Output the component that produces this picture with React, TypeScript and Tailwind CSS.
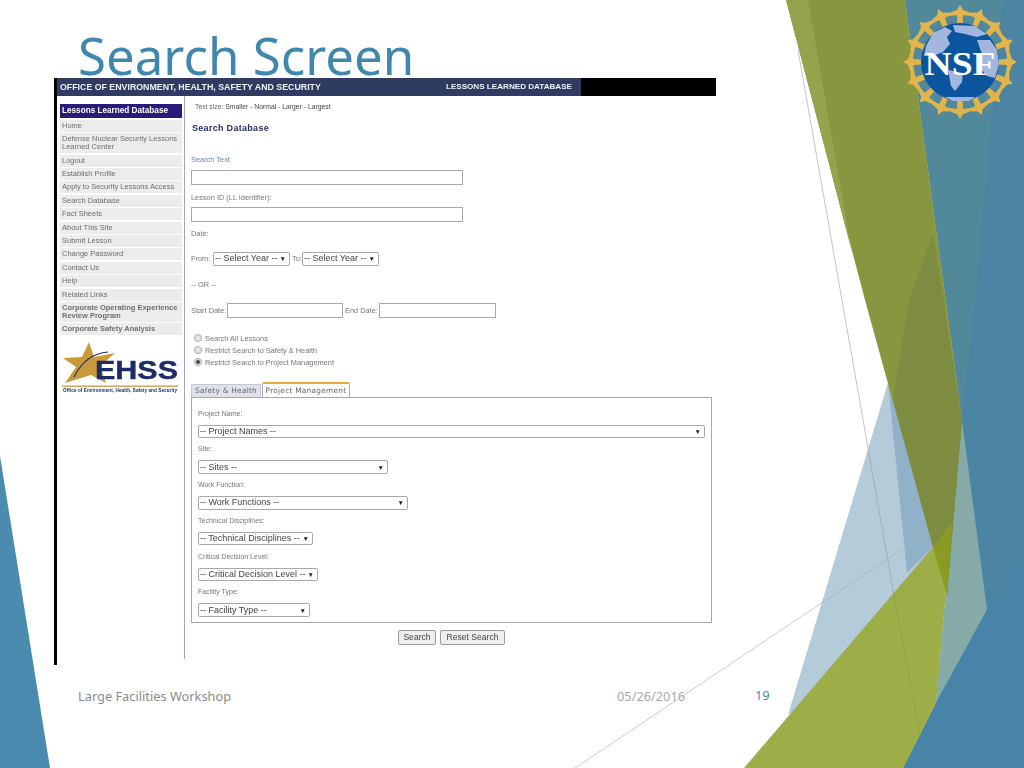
const ARIAL = "font-['Liberation_Sans',Arial,sans-serif]";

const MENU: { label: string; tall?: boolean; bold?: boolean }[] = [
  { label: "Home" },
  { label: "Defense Nuclear Security Lessons Learned Center", tall: true },
  { label: "Logout" },
  { label: "Establish Profile" },
  { label: "Apply to Security Lessons Access" },
  { label: "Search Database" },
  { label: "Fact Sheets" },
  { label: "About This Site" },
  { label: "Submit Lesson" },
  { label: "Change Password" },
  { label: "Contact Us" },
  { label: "Help" },
  { label: "Related Links" },
  { label: "Corporate Operating Experience Review Program", tall: true, bold: true },
  { label: "Corporate Safety Analysis", bold: true },
];

const SELECTS = [
  { label: "Project Name:", value: "-- Project Names --", width: "w-[507px]" },
  { label: "Site:", value: "-- Sites --", width: "w-[190px]" },
  { label: "Work Function:", value: "-- Work Functions --", width: "w-[210px]" },
  { label: "Technical Disciplines:", value: "-- Technical Disciplines --", width: "w-[115px]" },
  { label: "Critical Decision Level:", value: "-- Critical Decision Level --", width: "w-[120px]" },
  { label: "Facility Type:", value: "-- Facility Type --", width: "w-[112px]" },
];

const RADIOS = [
  { label: "Search All Lessons", on: false },
  { label: "Restrict Search to Safety & Health", on: false },
  { label: "Restrict Search to Project Management", on: true },
];

function SlideBackground() {
  return (
    <svg className="absolute inset-0" width="1024" height="768" viewBox="0 0 1024 768">
      <polygon points="0,456 50,768 0,768" fill="#4b8bb0" />
      {/* pale blue wedge */}
      <polygon points="933,233 962,420 950,600 788,715" fill="#b4ccda" />
      <polygon points="888,382 933,547 907,573" fill="#90b1c8" />
      {/* right blue field */}
      <polygon points="905,0 1024,0 1024,768 903,768 936,703 962,420" fill="#4c84a3" />
      <polygon points="905,0 1003,0 975,300 962,420" fill="#51899a" />
      <polygon points="962,420 987,610 936,703 952,523" fill="#85aaa8" />
      <polygon points="1024,558 1024,768 903,768 936,703 987,610" fill="#4784a8" />
      {/* olive */}
      <polygon points="786,0 905,0 962,420 947,595 933,547 865,300" fill="#88963f" />
      <polygon points="786,0 808,0 848,230 852,252" fill="#94a34c" />
      <polygon points="933,233 962,420 947,595 933,547 893,400 908,305" fill="#7d8c41" />
      {/* lime */}
      <polygon points="744,768 933,547 952,523 936,703 903,768" fill="#9dae48" />
      <polygon points="933,547 952,523 947,595" fill="#8a9a22" />
      {/* hairlines */}
      <line x1="798" y1="50" x2="893" y2="590" stroke="#9a9a9a" strokeWidth="0.8" opacity="0.75" />
      <line x1="893" y1="590" x2="920" y2="735" stroke="#8a9a40" strokeWidth="0.8" opacity="0.7" />
      <line x1="575" y1="768" x2="928" y2="532" stroke="#a9a9a9" strokeWidth="0.8" opacity="0.75" />
    </svg>
  );
}

const RAYS = Array.from({ length: 16 }, (_, i) => (i * 360) / 16);

function NsfLogo() {
  return (
    <svg className="absolute left-[895px] top-0" width="129" height="125" viewBox="0 0 129 125">
      <circle cx="65" cy="62" r="48.5" fill="none" stroke="#e2b44c" strokeWidth="3" />
      {RAYS.map((a) => (
        <g key={a} transform={`rotate(${a} 65 62)`}>
          <polygon points="65,5 68,10 75,12.5 68,15.5 67.5,25 62.5,25 62,15.5 55,12.5 62,10" fill="#e2b44c" />
        </g>
      ))}
      <circle cx="65" cy="62" r="39" fill="#0b559f" />
      <path
        d="M31 46 L38 33 L50 27 L57 31 L52 37 L55 44 L48 52 L38 56 L29 56 Z M58 25 L80 26 L92 34 L82 37 L70 34 L60 32 Z M82 40 L95 40 L102 50 L104 64 L100 78 L92 76 L85 68 L87 54 Z M53 70 L68 73 L67 82 L60 91 L56 86 Z M50 97 L80 97 L74 101 L58 101 Z"
        fill="#a3b6de"
      />
      <text
        x="65"
        y="75"
        textAnchor="middle"
        fontFamily="'Liberation Serif', serif"
        fontWeight="700"
        fontSize="33"
        fill="#ffffff"
        textLength="71"
        lengthAdjust="spacingAndGlyphs"
      >
        NSF
      </text>
    </svg>
  );
}

function EhssLogo() {
  return (
    <svg className="mt-[3px]" width="122" height="58" viewBox="0 0 122 58">
      <polygon
        points="29,2 34,17 55,13 40,26 46,43 31,35 5,43 16,27 3,18 22,17"
        fill="#c99a3a"
      />
      <path d="M14 37 C22 21 34 13 48 12" stroke="#1d2c66" strokeWidth="1.2" fill="none" />
      <text
        x="35"
        y="39"
        fontFamily="'Liberation Sans', Arial, sans-serif"
        fontWeight="700"
        fontSize="25"
        fill="#1d2c66"
        stroke="#1d2c66"
        strokeWidth="0.4"
        textLength="83"
        lengthAdjust="spacingAndGlyphs"
      >
        EHSS
      </text>
      <rect x="2" y="45.5" width="116" height="1.3" fill="#c99a3a" />
      <text
        x="60"
        y="52"
        textAnchor="middle"
        fontFamily="'Liberation Sans', Arial, sans-serif"
        fontWeight="700"
        fontSize="4.6"
        fill="#1d2c66"
        textLength="114"
      >
        Office of Environment, Health, Safety and Security
      </text>
    </svg>
  );
}

function Sidebar() {
  return (
    <aside className="flex h-full w-[128px] shrink-0 flex-col gap-[1.4px] border-r border-[#a3a3c4] pl-[3px] pr-[2px] pt-[8px]">
      <div className="mb-[0.5px] flex h-[14px] w-[122px] items-center bg-[#2c1a78] pl-[2px] text-[8.2px] font-bold whitespace-nowrap text-white">
        Lessons Learned Database
      </div>
      {MENU.map((m) => (
        <div
          key={m.label}
          className={`w-[122px] bg-[#ececec] pl-[2px] text-[7.5px] leading-[8px] text-[#6e6e6e] ${
            m.tall ? "h-[20px] pt-[2px]" : "h-[12px] pt-[2px]"
          } ${m.bold ? "font-bold" : ""}`}
        >
          {m.label}
        </div>
      ))}
      <EhssLogo />
    </aside>
  );
}

function SelectBox({ value, width }: { value: string; width: string }) {
  return (
    <div
      className={`flex h-[13.5px] ${width} items-center justify-between overflow-hidden rounded-[2px] border border-[#a9a9a9] bg-white pl-[1px] pr-[3px] text-[9px] whitespace-nowrap text-[#444]`}
    >
      <span>{value}</span>
      <span className="ml-[1px] text-[6.5px] text-[#222]">▼</span>
    </div>
  );
}

function TextField({ width }: { width: string }) {
  return <input readOnly className={`h-[15px] ${width} border border-[#a9a9a9] bg-white`} />;
}

function SearchForm() {
  return (
    <main className="flex min-w-0 flex-1 flex-col pl-[6px] text-[7.4px] leading-[9px] text-[#777]">
      <div className="mt-[6px] pl-[4px] text-[6.8px] text-[#666]">
        Text size: <span className="text-[#444]">Smaller - Normal - Larger - Largest</span>
      </div>
      <h1 className="mt-[13px] pl-[1px] text-[9px] font-bold tracking-[0.3px] text-[#27306e]">Search Database</h1>
      <div className="mt-[22px] text-[#5f86cc]">Search Text</div>
      <div className="mt-[6px]"><TextField width="w-[272px]" /></div>
      <div className="mt-[8px]">Lesson ID (LL Identifier):</div>
      <div className="mt-[5px]"><TextField width="w-[272px]" /></div>
      <div className="mt-[7px]">Date:</div>
      <div className="mt-[14px] flex items-center gap-[1px]">
        <span className="w-[21px] whitespace-nowrap">From:</span>
        <SelectBox value="-- Select Year --" width="w-[77px]" />
        <span className="w-[10px] pl-[1px]">To:</span>
        <SelectBox value="-- Select Year --" width="w-[77px]" />
      </div>
      <div className="mt-[14px]">-- OR --</div>
      <div className="mt-[14px] flex items-center">
        <span className="w-[36px] whitespace-nowrap">Start Date:</span>
        <TextField width="w-[116px]" />
        <span className="w-[36px] pl-[2px] whitespace-nowrap">End Date:</span>
        <TextField width="w-[117px]" />
      </div>
      <div className="mt-[16px] flex flex-col gap-[3px] pl-[3px]">
        {RADIOS.map((r) => (
          <div key={r.label} className="flex items-center gap-[3px]">
            <span className="flex size-[8px] items-center justify-center rounded-full border border-[#aaa] bg-[#e4e4e4]">
              {r.on && <span className="size-[4px] rounded-full bg-[#444]" />}
            </span>
            <span>{r.label}</span>
          </div>
        ))}
      </div>
      <div className="mt-[15px] flex items-end gap-[1px] font-['DejaVu_Sans',sans-serif] text-[7.4px] tracking-[0.25px]">
        <div className="flex h-[13px] w-[70px] items-center justify-center rounded-t-[2px] border border-b-0 border-[#c4c8d4] bg-[#dfe2ec] text-[#666]">
          Safety &amp; Health
        </div>
        <div className="flex h-[15px] w-[88px] items-center justify-center rounded-t-[2px] border border-b-0 border-t-2 border-[#aaa] border-t-[#e8ae3c] bg-white text-[#666]">
          Project Management
        </div>
      </div>
      <section className="flex h-[226px] w-[521px] flex-col gap-[7.3px] border border-[#a8a8a8] px-[6px] pt-[12px]">
        {SELECTS.map((s) => (
          <div key={s.label} className="flex flex-col gap-[7px]">
            <div className="text-[7px] leading-[8px] text-[#777]">{s.label}</div>
            <SelectBox value={s.value} width={s.width} />
          </div>
        ))}
      </section>
      <div className="mt-[7px] flex w-[521px] justify-center gap-[4px] text-[8.6px] text-[#444]">
        <button className="h-[15px] w-[38px] rounded-[2px] border border-[#9a9a9a] bg-[#eeeeee]">Search</button>
        <button className="h-[15px] w-[65px] rounded-[2px] border border-[#9a9a9a] bg-[#eeeeee]">Reset Search</button>
      </div>
    </main>
  );
}

function ScreenCapture() {
  return (
    <div className={`ml-[54px] flex h-[587px] w-[662px] flex-col border-l-[3px] border-black bg-white blur-[0.3px] ${ARIAL}`}>
      <div className="flex h-[18px] shrink-0 bg-black">
        <div className="flex w-[524px] items-center justify-between bg-[#2f3b61] pl-[3px] pr-[9px] pt-[1px] text-[#eef0f5]">
          <span className="text-[8.8px] font-bold whitespace-nowrap">OFFICE OF ENVIRONMENT, HEALTH, SAFETY AND SECURITY</span>
          <span className="text-[8.1px] font-bold whitespace-nowrap">LESSONS LEARNED DATABASE</span>
        </div>
      </div>
      <div className="flex min-h-0 flex-1 pb-[6px]">
        <Sidebar />
        <SearchForm />
      </div>
    </div>
  );
}

export default function App() {
  return (
    <div className="relative h-[768px] w-[1024px] overflow-hidden bg-white font-['Noto_Sans',sans-serif]">
      <SlideBackground />
      <NsfLogo />
      <div className="relative flex h-full flex-col">
        <h1 className="h-[78px] pl-[78px] pt-[32px] text-[51px] leading-[46px] font-normal text-[#3f87ad]">
          Search Screen
        </h1>
        <ScreenCapture />
        <footer className="mt-[22px] flex pl-[78px] text-[12.8px] leading-[18px]">
          <span className="w-[539px] text-[#8a8a8a]">Large Facilities Workshop</span>
          <span className="w-[138px] text-[#a8a8a8]">05/26/2016</span>
          <span className="-mt-[1px] text-[#4b86b4]">19</span>
        </footer>
      </div>
    </div>
  );
}
